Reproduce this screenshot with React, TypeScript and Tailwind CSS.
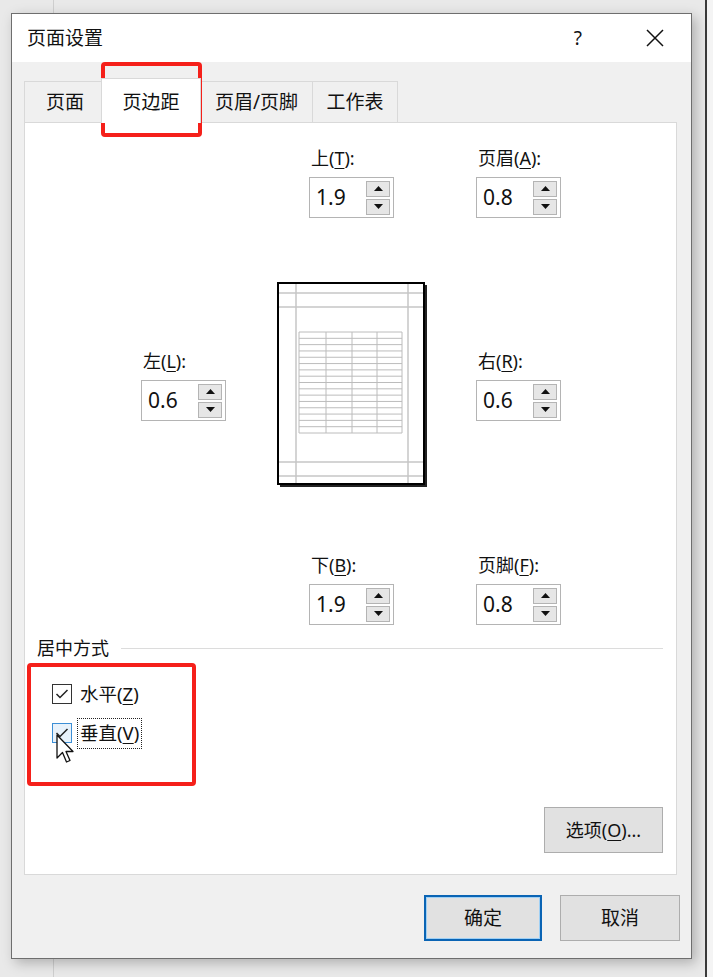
import React from "react";

function Arrow({ up }: { up?: boolean }) {
  return (
    <svg width="9" height="5" viewBox="0 0 9 5">
      <path d={up ? "M0 5 L4.5 0 L9 5 Z" : "M0 0 L4.5 5 L9 0 Z"} fill="#111" />
    </svg>
  );
}

function Spin({ label, acc, value }: { label: string; acc: string; value: string }) {
  return (
    <div className="flex flex-col items-start">
      <div className="h-[24px] pl-[2px] text-[18px] leading-[24px] text-[#111]">
        {label}(<span className="underline underline-offset-[3px]">{acc}</span>):
      </div>
      <div className="mt-[7px] flex h-[41px] w-[85px] items-center border border-[#b4b4b4] bg-white pl-[6px] pr-[3px]">
        <span className="flex-1 text-[21px] leading-none text-[#111]">{value}</span>
        <div className="flex flex-col gap-[2px]">
          <div className="flex h-[16px] w-[24px] items-center justify-center border border-[#b4b4b4] bg-[#e6e6e6]">
            <Arrow up />
          </div>
          <div className="flex h-[16px] w-[24px] items-center justify-center border border-[#b4b4b4] bg-[#e6e6e6]">
            <Arrow />
          </div>
        </div>
      </div>
    </div>
  );
}

function PagePreview() {
  const cols = [22, 49, 75, 100, 125];
  const rows = Array.from({ length: 17 }, (_, i) => 50 + (i * 101) / 16);
  return (
    <svg width="151" height="206" viewBox="0 0 151 206">
      <rect x="3" y="3" width="147" height="202" fill="#222" />
      <rect x="1" y="1" width="146" height="201" fill="#fff" stroke="#000" strokeWidth="2" />
      <g stroke="#c6c6c6" strokeWidth="1.5">
        <line x1="19" y1="2" x2="19" y2="201" />
        <line x1="131" y1="2" x2="131" y2="201" />
        <line x1="2" y1="11" x2="146" y2="11" />
        <line x1="2" y1="25" x2="146" y2="25" />
        <line x1="2" y1="180" x2="146" y2="180" />
        <line x1="2" y1="194" x2="146" y2="194" />
      </g>
      <g stroke="#bcbcbc" strokeWidth="1">
        {cols.map((x) => (
          <line key={x} x1={x} y1="50" x2={x} y2="151" />
        ))}
        {rows.map((y, i) => (
          <line key={i} x1="22" y1={y} x2="125" y2={y} />
        ))}
      </g>
    </svg>
  );
}

function Check({ hover }: { hover?: boolean }) {
  return (
    <div
      className={
        hover
          ? "flex h-[20px] w-[20px] items-center justify-center border-[1.5px] border-[#3c8fd6] bg-[#e8f2fb]"
          : "flex h-[20px] w-[20px] items-center justify-center border-[1.5px] border-[#333] bg-white"
      }
    >
      <svg width="16" height="16" viewBox="0 0 16 16">
        <path d="M2.5 8 L6 11.5 L13.5 4" fill="none" stroke="#222" strokeWidth="1.5" />
      </svg>
    </div>
  );
}

export default function App() {
  return (
    <div className="relative h-[977px] w-[713px] overflow-hidden bg-[#e9e9e9] pl-[11px] pt-[13px] font-['Noto_Sans','Noto_Sans_CJK_SC',sans-serif] text-[#111]">
      {/* background window edges */}
      <div className="absolute left-[53px] top-0 h-full w-px bg-[#cfcfcf]" />
      <div className="absolute left-[705px] top-0 h-full w-[2px] bg-[#3a3a3a]" />
      <div className="absolute left-[707px] top-0 h-full w-[6px] bg-[#f4f4f4]" />

      {/* DIALOG */}
      <div className="relative flex h-[946px] w-[681px] flex-col border border-[#6e6e6e] bg-[#f0f0f0] shadow-[4px_4px_12px_rgba(0,0,0,0.25)]">
        {/* TITLE BAR */}
        <div className="flex h-[48px] items-center bg-white pl-[15px] pr-[27px]">
          <span className="flex-1 text-[19px]">页面设置</span>
          <span className="mr-[64px] text-[19px]">?</span>
          <svg width="18" height="18" viewBox="0 0 18 18">
            <path d="M1 1 L17 17 M17 1 L1 17" stroke="#111" strokeWidth="1.5" />
          </svg>
        </div>

        {/* TABS */}
        <div className="flex pl-[12px] pt-[19px]">
          <div className="flex h-[41px] w-[77px] items-center justify-center border-l border-t border-[#d9d9d9] pl-[4px] text-[19px]">
            页面
          </div>
          <div className="relative z-10 -mb-px -mt-[3px] flex h-[45px] w-[100px] items-center justify-center border-x border-t border-[#d9d9d9] bg-white pt-[2px] text-[19px]">
            页边距
          </div>
          <div className="flex h-[41px] w-[112px] items-center justify-center border-r border-t border-[#d9d9d9] text-[19px]">
            页眉/页脚
          </div>
          <div className="flex h-[41px] w-[85px] items-center justify-center border-r border-t border-[#d9d9d9] text-[19px]">
            工作表
          </div>
        </div>

        {/* PANEL */}
        <div className="ml-[12px] flex h-[753px] w-[653px] flex-col border border-[#d9d9d9] bg-white">
          <div className="flex pl-[284px] pt-[23px]">
            <div className="w-[167px]">
              <Spin label="上" acc="T" value="1.9" />
            </div>
            <Spin label="页眉" acc="A" value="0.8" />
          </div>

          <div className="mt-[64px] flex items-start">
            <div className="ml-[116px] w-[136px] pt-[67px]">
              <Spin label="左" acc="L" value="0.6" />
            </div>
            <PagePreview />
            <div className="ml-[48px] pt-[67px]">
              <Spin label="右" acc="R" value="0.6" />
            </div>
          </div>

          <div className="mt-[65px] flex pl-[284px]">
            <div className="w-[167px]">
              <Spin label="下" acc="B" value="1.9" />
            </div>
            <Spin label="页脚" acc="F" value="0.8" />
          </div>

          {/* CENTER ON PAGE */}
          <div className="mt-[11px] flex items-center pl-[12px] pr-[13px]">
            <span className="text-[18px] leading-[24px]">居中方式</span>
            <div className="ml-[12px] h-px flex-1 bg-[#dcdcdc]" />
          </div>

          <div className="mt-[24px] flex flex-col gap-[19px] pl-[27px]">
            <div className="flex h-[20px] items-center gap-[8px]">
              <Check />
              <span className="text-[18.5px]">
                水平(<span className="underline underline-offset-[3px]">Z</span>)
              </span>
            </div>
            <div className="flex h-[20px] items-center gap-[5px]">
              <Check hover />
              <span className="flex h-[31px] items-center border border-dotted border-[#222] px-[2px] text-[18.5px]">
                垂直(<span className="underline underline-offset-[3px]">V</span>)
              </span>
            </div>
          </div>

          <div className="flex-1" />
          <div className="mb-[21px] mr-[13px] flex justify-end">
            <div className="flex h-[46px] w-[119px] items-center justify-center border border-[#adadad] bg-[#e1e1e1] text-[18px]">
              选项(<span className="underline underline-offset-[3px]">O</span>)...
            </div>
          </div>
        </div>

        {/* FOOTER BUTTONS */}
        <div className="mt-[20px] flex justify-end gap-[18px] pr-[11px]">
          <div className="flex h-[46px] w-[118px] items-center justify-center border-2 border-[#0a64b4] bg-[#e1e1e1] text-[19px] shadow-[inset_0_0_0_1px_#9fd0f5]">
            确定
          </div>
          <div className="flex h-[46px] w-[120px] items-center justify-center border border-[#adadad] bg-[#e1e1e1] text-[19px]">
            取消
          </div>
        </div>
      </div>

      {/* RED ANNOTATIONS */}
      <div className="absolute left-[101px] top-[62px] h-[75px] w-[101px] rounded-[4px] border-[4px] border-[#f5201a]" />
      <div className="absolute left-[27px] top-[663px] h-[123px] w-[169px] rounded-[4px] border-[4px] border-[#f5201a]" />

      {/* CURSOR */}
      <svg className="absolute left-[56px] top-[734px]" width="19" height="32" viewBox="0 0 19 32">
        <path
          d="M1 1 L1 24 L6.5 18.5 L10.5 28 L14 26.5 L10 17.5 L17 17.5 Z"
          fill="#fff"
          stroke="#111"
          strokeWidth="1.3"
          strokeLinejoin="round"
        />
      </svg>
    </div>
  );
}
